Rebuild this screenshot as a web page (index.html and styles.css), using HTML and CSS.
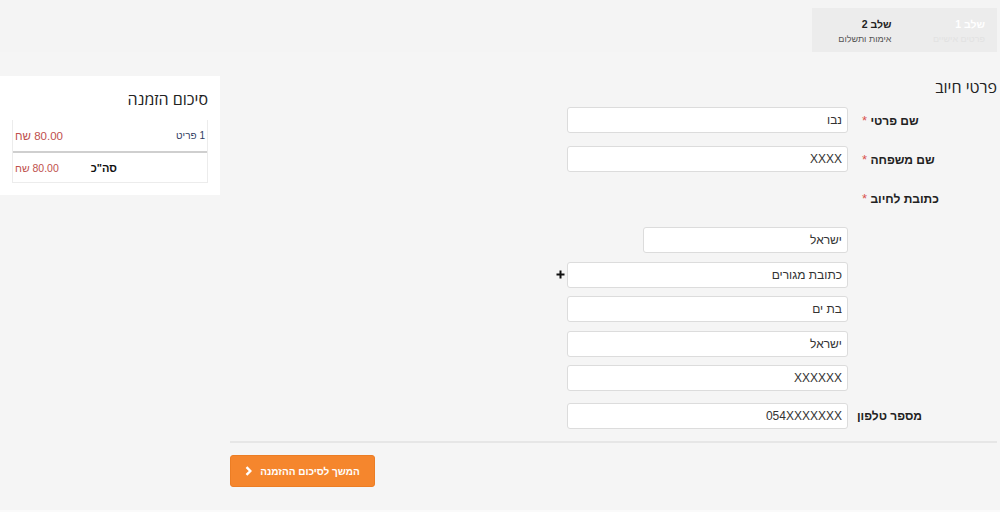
FILE: index.html
```html
<!DOCTYPE html>
<html lang="he" dir="rtl">
<head>
<meta charset="utf-8">
<title>פרטי חיוב</title>
<link rel="stylesheet" href="styles.css">
</head>
<body>
<header class="topbar">
  <div class="steps">
    <div class="step step-done">
      <div class="step-num">שלב 1</div>
      <div class="step-name">פרטים אישיים</div>
    </div>
    <div class="step step-active">
      <div class="step-num">שלב 2</div>
      <div class="step-name">אימות ותשלום</div>
    </div>
  </div>
</header>
<main class="page">
  <section class="billing">
    <h2 class="section-title">פרטי חיוב</h2>
    <div class="row">
      <label class="label">שם פרטי <span class="req">*</span></label>
      <div class="field">נבו</div>
    </div>
    <div class="row">
      <label class="label">שם משפחה <span class="req">*</span></label>
      <div class="field">XXXX</div>
    </div>
    <div class="row row-label-only">
      <label class="label">כתובת לחיוב <span class="req">*</span></label>
    </div>
    <div class="address">
      <div class="row row-tight"><span class="label"></span><div class="field field-short">ישראל</div></div>
      <div class="row row-tight"><span class="label"></span><div class="field">כתובת מגורים</div>
        <svg class="plus" width="9" height="9" viewBox="0 0 9 9"><path d="M4.5 0.5v8M0.5 4.5h8" stroke="#111" stroke-width="2"/></svg>
      </div>
      <div class="row row-tight"><span class="label"></span><div class="field">בת ים</div></div>
      <div class="row row-tight"><span class="label"></span><div class="field">ישראל</div></div>
      <div class="row row-tight"><span class="label"></span><div class="field">XXXXXX</div></div>
    </div>
    <div class="row row-phone">
      <label class="label label-plain">מספר טלפון</label>
      <div class="field">054XXXXXXX</div>
    </div>
    <div class="actions">
      <button class="btn-next" type="button">המשך לסיכום ההזמנה
        <svg class="chev" width="7" height="10" viewBox="0 0 7 10"><path d="M1.5 1.2l3.8 3.8-3.8 3.8" fill="none" stroke="#fff" stroke-width="2.4"/></svg>
      </button>
    </div>
  </section>
  <aside class="summary">
    <h2 class="summary-title">סיכום הזמנה</h2>
    <div class="sum-table">
      <div class="sum-row sum-row-item">
        <span class="sum-name">1 פריט</span>
        <span class="price">80.00 שח</span>
      </div>
      <div class="sum-row sum-row-total">
        <span class="sum-total">סה"כ</span>
        <span class="price">80.00 שח</span>
      </div>
    </div>
  </aside>
</main>
<footer class="foot"></footer>
</body>
</html>
```

FILE: styles.css
```css
* { box-sizing: border-box; }
html, body { margin: 0; padding: 0; }
body {
  background: #f5f5f5;
  font-family: "Liberation Sans", Arial, "DejaVu Sans", sans-serif;
  color: #333;
  font-size: 12px;
  height: 512px;
  overflow: hidden;
}
.topbar {
  height: 52px;
  display: flex;
  padding: 8px 3px 0 0;
  background: #f4f4f4;
}
.steps {
  display: flex;
  background: #ececec;
  width: 185px;
  height: 44px;
}
.step {
  width: 95px;
  padding: 9px 12px 0 0;
}
.step-active { padding-right: 13px; }
.step-num { font-weight: bold; font-size: 10.5px; line-height: 14px; }
.step-name { font-size: 9px; line-height: 14px; margin-top: 1px; }
.step-done .step-num { color: #ffffff; }
.step-done .step-name { color: #e2e2e2; }
.step-active .step-num { color: #222; }
.step-active .step-name { color: #555; }

.page {
  display: flex;
  align-items: flex-start;
  padding-top: 24px;
}
.billing {
  width: 767px;
  margin-right: 3px;
}
.section-title {
  margin: 0;
  font-family: "Open Sans", "Liberation Sans", sans-serif;
  font-weight: 400;
  font-size: 16px;
  line-height: 22px;
  color: #222;
  height: 31px;
}
.row {
  display: flex;
  align-items: center;
  margin-top: 13px;
}
.section-title + .row { margin-top: 0; }
.label {
  width: 149px;
  flex: none;
  text-align: left;
  padding-left: 12px;
  font-weight: bold;
  font-size: 12px;
  color: #222;
}
.label-plain { padding-left: 9px; }
.req {
  color: #d9534f;
  font-weight: normal;
  padding-left: 2px;
  font-size: 13px;
}
.row-label-only { height: 26px; }
.address { margin-top: 16px; }
.row-tight { margin-top: 8.5px; }
.row-tight:first-child { margin-top: 0; }
.field {
  width: 281px;
  height: 26px;
  background: #fff;
  border: 1px solid #dcdcdc;
  border-radius: 3px;
  padding: 0 5px;
  line-height: 24px;
  font-size: 12px;
  color: #333;
}
.field-short { width: 205px; }
.plus { margin-right: 2px; margin-top: -1px; }
.row-phone { margin-top: 12px; }
.actions {
  margin-top: 12px;
  border-top: 2px solid #e6e6e6;
  padding-top: 12px;
  display: flex;
  justify-content: flex-end;
}
.btn-next {
  width: 145px;
  height: 32px;
  background: #f5862d;
  border: 1px solid #ec7d24;
  border-radius: 3px;
  color: #fff;
  font-family: "Liberation Sans", Arial, sans-serif;
  font-weight: bold;
  font-size: 10px;
  display: flex;
  align-items: center;
  justify-content: center;
  gap: 8px;
  padding: 0;
}
.summary {
  margin-right: auto;
  width: 220px;
  background: #fff;
  padding: 12px;
}
.summary-title {
  margin: 0;
  font-family: "Open Sans", "Liberation Sans", sans-serif;
  font-weight: 400;
  font-size: 16px;
  line-height: 22px;
  color: #222;
  height: 32px;
}
.sum-table {
  border: 1px solid #ececec;
  border-top: none;
}
.sum-row {
  display: flex;
  justify-content: space-between;
  align-items: center;
  padding: 0 2px;
}
.sum-row-item { height: 33px; border-bottom: 2px solid #cfcfcf; }
.sum-row-total { height: 29px; }
.sum-name { color: #2f3d63; font-size: 10px; }
.sum-total { font-weight: bold; color: #111; margin-right: 88px; font-size: 11px; }
.price { color: #c0504d; font-size: 11.5px; }
.sum-row-total .price { font-size: 10.5px; }
.foot {
  position: fixed;
  left: 0; right: 0; bottom: 0;
  height: 2px;
  background: #fafafa;
}
```
